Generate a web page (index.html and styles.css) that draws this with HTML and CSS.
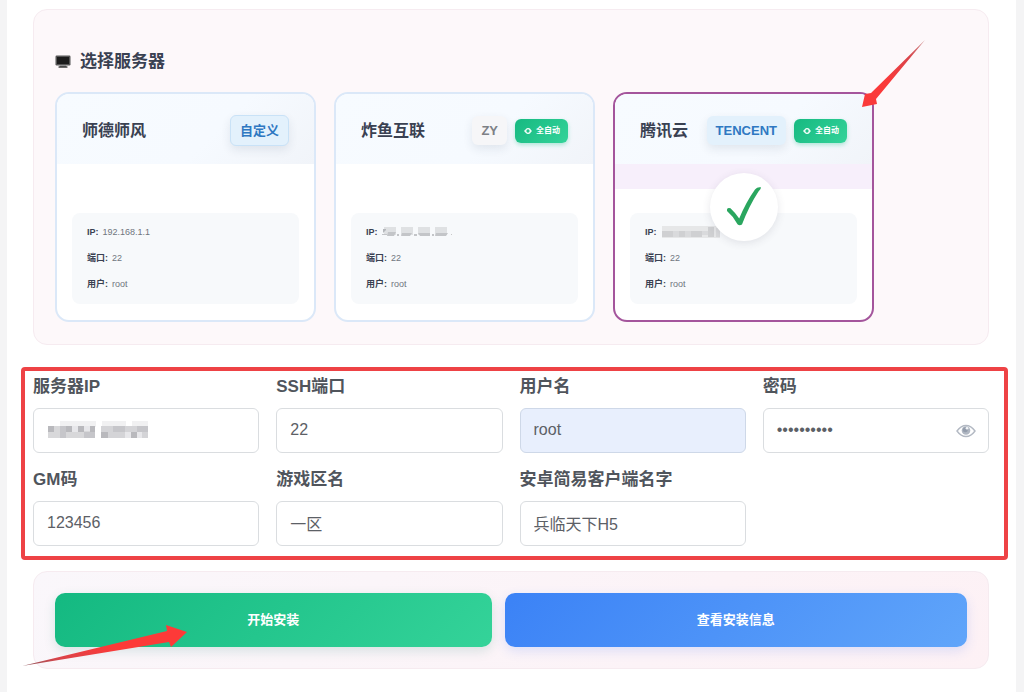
FILE: index.html
```html
<!DOCTYPE html>
<html lang="zh-CN">
<head>
<meta charset="utf-8">
<meta name="viewport" content="width=device-width, initial-scale=1">
<title>选择服务器</title>
<link rel="stylesheet" href="styles.css">
</head>
<body>
<main class="page">
  <section class="panel servers">
    <h2 class="panel-title">
      <svg class="title-icon" width="16" height="14" viewBox="0 0 16 14" aria-hidden="true">
        <rect x="0.5" y="0.5" width="15" height="10" rx="1.2" fill="#555"/>
        <rect x="2" y="2" width="12" height="7" fill="#1c1c1c"/>
        <path d="M5 10.500h6v1.500H5z" fill="#777"/>
        <rect x="3.500" y="11.300" width="9" height="1.500" rx=".5" fill="#3c3c3c"/>
      </svg>
      选择服务器
    </h2>
    <div class="server-grid">
      <article class="card">
        <header class="card-head">
          <h3 class="card-name">师德师风</h3>
          <span class="tag tag-blue tag-outline">自定义</span>
        </header>
        <div class="card-body">
          <dl class="info">
            <div class="info-row"><dt>IP:</dt><dd>192.168.1.1</dd></div>
            <div class="info-row"><dt>端口:</dt><dd>22</dd></div>
            <div class="info-row"><dt>用户:</dt><dd>root</dd></div>
          </dl>
        </div>
      </article>
      <article class="card">
        <header class="card-head">
          <h3 class="card-name">炸鱼互联</h3>
          <span class="tag tag-gray">ZY</span>
          <span class="auto">
            <svg width="8" height="8" viewBox="0 0 8 8" aria-hidden="true"><circle cx="4" cy="4" r="2.300" fill="none" stroke="#fff" stroke-width="1.300"/><path d="M0 4l1.500-1.500v3zM8 4L6.500 2.500v3z" fill="#fff"/></svg>
            全自动
          </span>
        </header>
        <div class="card-body">
          <dl class="info">
            <div class="info-row"><dt>IP:</dt><dd>
              <svg width="72" height="10" viewBox="0 0 72 10" role="img" aria-label="已隐藏">
                <g fill="#dfe1e3"><rect x="2" width="12" height="8"/><rect x="19" width="12" height="8"/><rect x="36" width="12" height="8"/><rect x="53" width="12" height="8"/></g>
                <g fill="#c3c5c8"><path d="M0 7h5v1H0zM6 5h8l-2 4H5zM15 7h2v2h-2zM20 6h10l-2 3h-9zM32 7h3v2h-3zM36 6h12v3H38zM50 7h2v2h-2zM54 6h12l-2 3H53z"/></g>
                <path d="M1 2h3v1L1 6z" fill="#b4b7bb"/><rect x="69" y="7" width="1" height="1" fill="#c8c8c8"/>
              </svg>
            </dd></div>
            <div class="info-row"><dt>端口:</dt><dd>22</dd></div>
            <div class="info-row"><dt>用户:</dt><dd>root</dd></div>
          </dl>
        </div>
      </article>
      <article class="card card-selected">
        <header class="card-head">
          <h3 class="card-name">腾讯云</h3>
          <span class="tag tag-blue">TENCENT</span>
          <span class="auto">
            <svg width="8" height="8" viewBox="0 0 8 8" aria-hidden="true"><circle cx="4" cy="4" r="2.300" fill="none" stroke="#fff" stroke-width="1.300"/><path d="M0 4l1.500-1.500v3zM8 4L6.500 2.500v3z" fill="#fff"/></svg>
            全自动
          </span>
        </header>
        <div class="strip"></div>
        <div class="card-body">
          <dl class="info">
            <div class="info-row"><dt>IP:</dt><dd>
              <svg width="60" height="12" viewBox="0 0 60 12" role="img" aria-label="已隐藏">
                <rect x="1" y="0" width="58" height="12" fill="#e6e7e8"/>
                <g fill="#cfd0d2"><rect x="1" y="5" width="11" height="6"/><rect x="18" y="5" width="6" height="6"/><rect x="30" y="5" width="11" height="6"/><rect x="47" y="1" width="6" height="10"/></g>
                <g fill="#d9dadc"><rect x="12" y="5" width="6" height="6"/><rect x="24" y="5" width="6" height="6"/><rect x="41" y="5" width="6" height="4"/><rect x="55" y="2" width="4" height="9"/></g>
              </svg>
            </dd></div>
            <div class="info-row"><dt>端口:</dt><dd>22</dd></div>
            <div class="info-row"><dt>用户:</dt><dd>root</dd></div>
          </dl>
        </div>
        <div class="check">
          <svg width="36" height="40" viewBox="0 0 36 40" aria-hidden="true"><path d="M1 22.500Q1.500 20.500 4.500 21.300Q9 25.500 13.200 31.500Q20 15 29 2.500Q31.500 -.5 34.800 .3Q35.600 1.300 32.500 4.500Q23 19 16 37.500Q13.500 39 11.500 37.300Q7.500 29.500 1 24z" fill="#2aa65f"/></svg>
        </div>
        <svg class="arrow arrow-card" width="66" height="70" viewBox="0 0 66 70" aria-hidden="true"><defs><linearGradient id="tail-a" x1="1" y1="0" x2="0" y2="1"><stop offset="0" stop-color="#c98a8a"/><stop offset=".25" stop-color="#d9444a"/><stop offset=".6" stop-color="#fa3a3a"/></linearGradient></defs><path d="M63 0L9 53L3 54L0 67L15 64L14 59z" fill="url(#tail-a)"/></svg>
      </article>
    </div>
  </section>

  <form class="form" id="install">
    <div class="field">
      <label for="ip">服务器IP</label>
      <div class="control">
        <input id="ip" type="text">
        <svg class="mosaic" width="100" height="18" viewBox="0 0 100 18" aria-hidden="true">
          <g fill="#f1f1f2"><rect x="12" width="18" height="6"/><rect x="30" width="18" height="6"/><rect x="54" width="24" height="6"/><rect x="84" width="16" height="6"/></g>
          <rect y="5" width="47" height="12" fill="#d8d8da"/><rect x="53" y="5" width="47" height="12" fill="#d4d4d7"/>
          <g fill="#b9b9bd"><rect y="5" width="6" height="6"/><rect x="18" y="5" width="6" height="6"/><rect x="30" y="5" width="6" height="6"/><rect x="42" y="5" width="5" height="6"/><rect x="53" y="11" width="7" height="6"/><rect x="83" y="11" width="6" height="6"/></g>
          <g fill="#c6c6ca"><rect x="12" y="5" width="6" height="12"/><rect x="36" y="11" width="11" height="6"/><rect x="65" y="5" width="12" height="6"/><rect x="89" y="5" width="11" height="6"/></g>
          <g fill="#e7e7ea"><rect x="24" y="5" width="6" height="6"/><rect x="36" y="5" width="6" height="5"/><rect x="77" y="11" width="6" height="6"/><rect x="89" y="11" width="5" height="6"/></g>
        </svg>
      </div>
    </div>
    <div class="field">
      <label for="port">SSH端口</label>
      <div class="control"><input id="port" type="text" value="22"></div>
    </div>
    <div class="field">
      <label for="user">用户名</label>
      <div class="control"><input id="user" class="autofilled" type="text" value="root"></div>
    </div>
    <div class="field">
      <label for="password">密码</label>
      <div class="control">
        <input id="password" type="password" value="abcdefghij">
        <button class="eye" type="button" aria-label="显示密码">
          <svg width="20" height="14" viewBox="0 0 20 14" aria-hidden="true"><path d="M1 7Q5 1.500 10 1.500T19 7Q15 12.500 10 12.500T1 7z" fill="#fff" stroke="#b3b9c3" stroke-width="1.400"/><circle cx="10" cy="6.500" r="4.300" fill="#b0b7c2"/><circle cx="9.300" cy="5.700" r="2.500" fill="#949dac"/><circle cx="11" cy="4.300" r="1.300" fill="#f3f5f7"/></svg>
        </button>
      </div>
    </div>
    <div class="field">
      <label for="gm">GM码</label>
      <div class="control"><input id="gm" type="text" value="123456"></div>
    </div>
    <div class="field">
      <label for="zone">游戏区名</label>
      <div class="control"><input id="zone" type="text" value="一区"></div>
    </div>
    <div class="field">
      <label for="client">安卓简易客户端名字</label>
      <div class="control"><input id="client" type="text" value="兵临天下H5"></div>
    </div>
    <div class="highlight"></div>
  </form>

  <section class="panel actions">
    <button class="btn btn-green" type="submit" form="install">开始安装</button>
    <button class="btn btn-blue" type="button">查看安装信息</button>
    <svg class="arrow arrow-install" width="166" height="44" viewBox="0 0 166 44" aria-hidden="true"><defs><linearGradient id="tail-b" x1="0" y1="1" x2="1" y2="0"><stop offset="0" stop-color="#8c5a60"/><stop offset=".2" stop-color="#d9444a"/><stop offset=".5" stop-color="#fd3a38"/></linearGradient></defs><path d="M0 41L145 6L144 0L165 7L149 22L147 17z" fill="url(#tail-b)"/></svg>
  </section>
</main>
</body>
</html>
```

FILE: styles.css
```css
* {
  box-sizing: border-box;
}

body {
  margin: 0;
  background: #f4f4f5;
  color: #3a4152;
  font-family: "Liberation Sans", "Noto Sans CJK SC", sans-serif;
}

h2,
h3,
dl,
dd {
  margin: 0;
}

.page {
  min-height: 100vh;
  margin: 0 8px 0 7px;
  padding: 9px 27px 22px 26px;
  background: #fff;
}

.panel {
  border: 1px solid #f6ebf0;
  border-radius: 14px;
}

.servers {
  padding: 40px 21px 22px;
  background: #fdf8fa;
}

.panel-title {
  display: flex;
  align-items: center;
  gap: 9px;
  margin-bottom: 18px;
  font-size: 17px;
  line-height: 24px;
}

.server-grid {
  display: grid;
  grid-template-columns: repeat(auto-fill, 261px);
  gap: 18px;
}

.card {
  position: relative;
  border: 2px solid #dbe8f8;
  border-radius: 14px;
  background: #fff;
}

.card-selected {
  border-color: #a4559c;
}

.card-head {
  display: flex;
  align-items: center;
  gap: 8px;
  height: 70px;
  padding: 3px 25px 0;
  border-radius: 12px 12px 0 0;
  background: linear-gradient(135deg, #f7fbff 0%, #f6faff 60%, #f1f4f9 100%);
}

.card-name {
  margin-right: auto;
  font-size: 16px;
  line-height: 24px;
}

.tag {
  padding: 0 9px;
  border-radius: 6px;
  font-size: 13px;
  font-weight: 700;
  line-height: 29px;
  box-shadow: 0 4px 10px rgba(40, 60, 90, 0.1);
}

.tag-blue {
  background: #e3f1fc;
  color: #2f78c2;
}

.tag-outline {
  border: 1px solid #c9e2f7;
}

.tag-gray {
  background: #f6f6f8;
  color: #7d8086;
}

.auto {
  display: flex;
  align-items: center;
  gap: 4px;
  padding: 0 8px 0 9px;
  border-radius: 6px;
  background: linear-gradient(135deg, #16b981, #34d399);
  color: #fff;
  font-size: 8px;
  font-weight: 700;
  line-height: 24px;
  box-shadow: 0 2px 4px rgba(16, 185, 129, 0.3);
}

.strip {
  height: 25px;
  margin-bottom: -25px;
  background: #f7effb;
}

.card-body {
  padding: 49px 15px 16px;
}

.info {
  padding: 6px 15px 7px;
  border-radius: 8px;
  background: #f7f9fb;
  font-size: 9px;
  line-height: 26px;
}

.info-row {
  display: flex;
  gap: 4px;
}

.info dt {
  font-weight: 700;
}

.info dd {
  display: flex;
  align-items: center;
  color: #70757e;
}

.check {
  position: absolute;
  top: 50%;
  left: 50%;
  display: grid;
  place-items: center;
  width: 68px;
  height: 68px;
  border-radius: 50%;
  background: #fff;
  box-shadow: 0 2px 8px rgba(60, 60, 80, 0.12);
  transform: translate(-50%, -50%);
}

.arrow {
  position: absolute;
  pointer-events: none;
}

.arrow-card {
  top: -54px;
  right: -56px;
}

.form {
  position: relative;
  display: grid;
  grid-template-columns: repeat(4, 1fr);
  gap: 15px 17px;
  margin: 30px 0 25px;
}

.field {
  min-width: 0;
}

.field label {
  display: block;
  margin-bottom: 9px;
  color: #50555c;
  font-size: 17px;
  font-weight: 700;
  line-height: 24px;
}

.control {
  position: relative;
}

.control input {
  display: block;
  width: 100%;
  height: 45px;
  padding: 0 13px 2px;
  border: 1px solid #dadde0;
  border-radius: 6px;
  background: #fff;
  color: #5c6066;
  font-family: inherit;
  font-size: 16px;
}

.control .autofilled {
  border-color: #ced8e8;
  background: #e8effd;
}

.mosaic {
  position: absolute;
  top: 13px;
  left: 15px;
}

.eye {
  position: absolute;
  top: 50%;
  right: 13px;
  display: flex;
  padding: 0;
  border: 0;
  background: none;
  transform: translateY(-50%);
}

.highlight {
  position: absolute;
  inset: -8px -19px -14px -12px;
  border: 4px solid #ee4245;
  border-radius: 4px;
  pointer-events: none;
}

.actions {
  position: relative;
  display: flex;
  gap: 13px;
  padding: 21px;
  background: linear-gradient(135deg, #faf7fb, #fdf1f5);
}

.btn {
  flex: 1 1 auto;
  height: 54px;
  padding: 0 16px 4px;
  border: 0;
  border-radius: 10px;
  color: #fff;
  font-family: inherit;
  font-size: 13px;
  font-weight: 700;
}

.btn-green {
  background: linear-gradient(135deg, #14b981, #34d399);
  box-shadow: 0 4px 12px rgba(16, 120, 100, 0.15);
}

.btn-blue {
  background: linear-gradient(135deg, #3b82f6, #60a5fa);
  box-shadow: 0 4px 12px rgba(59, 110, 246, 0.16);
}

.arrow-install {
  bottom: -1px;
  left: -12px;
}
```
